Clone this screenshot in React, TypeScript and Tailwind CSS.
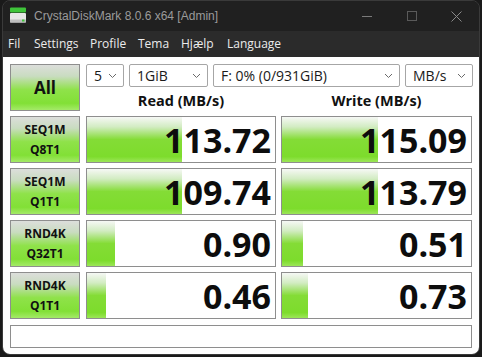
import { ReactNode } from "react";

const rows = [
  { a: "SEQ1M", b: "Q8T1", read: "113.72", write: "115.09", rb: 95, wb: 96 },
  { a: "SEQ1M", b: "Q1T1", read: "109.74", write: "113.79", rb: 95, wb: 96 },
  { a: "RND4K", b: "Q32T1", read: "0.90", write: "0.51", rb: 28, wb: 21 },
  { a: "RND4K", b: "Q1T1", read: "0.46", write: "0.73", rb: 19, wb: 26 },
];

const btn =
  "border border-[#8e8e8e] bg-[linear-gradient(to_bottom,#dcdedb_0%,#c9dcc0_25%,#8fe24a_55%,#82e036_85%,#a4ea68_100%)] text-[#111] font-bold flex flex-col items-center justify-center";

const bar =
  "bg-[linear-gradient(to_bottom,#f6f8f5_0%,#d2ecc2_22%,#84dc36_50%,#7ddc2c_88%,#9ce658_100%)]";

function Chevron() {
  return (
    <svg width="9" height="6" viewBox="0 0 9 6" className="shrink-0">
      <polyline points="1,1 4.5,4.5 8,1" fill="none" stroke="#6a6a6a" strokeWidth="1" />
    </svg>
  );
}

function Combo({ w, children }: { w: string; children: ReactNode }) {
  return (
    <div className={`${w} h-[23px] border border-[#a6a6a6] rounded-[2px] bg-white flex items-center justify-between pl-[7px] pr-[6px] text-[14px] text-[#1a1a1a]`}>
      <span>{children}</span>
      <Chevron />
    </div>
  );
}

function Cell({ value, fill, w }: { value: string; fill: number; w: string }) {
  return (
    <div className={`${w} h-[47px] border border-[#8e8e8e] bg-white relative overflow-hidden`}>
      <div className={`absolute left-0 top-0 bottom-0 ${bar}`} style={{ width: fill }} />
      <div className="relative h-full flex items-center justify-end pr-[4px] text-[34px] font-bold leading-none text-[#0d0d0d]">
        {value}
      </div>
    </div>
  );
}

export default function App() {
  return (
    <div className="w-[482px] h-[357px] bg-[#1a1a1a] overflow-hidden font-['Open_Sans','Noto_Sans',sans-serif]">
      <div className="ml-[2px] w-[478px] h-[355px] border border-[#3a3a3a] rounded-[8px] overflow-hidden flex flex-col">
        {/* title bar */}
        <div className="h-[30px] bg-[#202020] flex items-center shrink-0">
          <svg width="18" height="18" viewBox="0 0 18 18" className="ml-[6px]">
            <rect x="1" y="0.5" width="16" height="5" rx="1" fill="#3fc43a" />
            <rect x="1" y="6" width="16" height="9.5" rx="1" fill="#e6e6e6" />
            <rect x="1" y="12.5" width="16" height="3" fill="#bdbdbd" />
            <rect x="13" y="12.5" width="2.5" height="2" fill="#3fc43a" />
          </svg>
          <span className="ml-[7px] text-[12px] text-[#9b9b9b] font-['Liberation_Sans',sans-serif]">
            CrystalDiskMark 8.0.6 x64 [Admin]
          </span>
          <div className="ml-auto flex h-full">
            <div className="w-[45px] flex items-center justify-center">
              <div className="w-[10px] h-px bg-[#7a7a7a]" />
            </div>
            <div className="w-[45px] flex items-center justify-center">
              <div className="w-[10px] h-[10px] border border-[#5a5a5a]" />
            </div>
            <div className="w-[45px] flex items-center justify-center">
              <svg width="11" height="11" viewBox="0 0 11 11">
                <path d="M0.5 0.5 L10.5 10.5 M10.5 0.5 L0.5 10.5" stroke="#8a8a8a" strokeWidth="1" />
              </svg>
            </div>
          </div>
        </div>

        {/* menu bar */}
        <div className="h-[26px] bg-[#2b2b2b] flex items-center text-[12px] text-[#ececec] pl-[5px] shrink-0">
          <span className="w-[26px]">Fil</span>
          <span className="w-[56px]">Settings</span>
          <span className="w-[48px]">Profile</span>
          <span className="w-[43px]">Tema</span>
          <span className="w-[46px]">Hjælp</span>
          <span>Language</span>
        </div>

        {/* content */}
        <div className="flex-1 bg-white pl-[7px] pt-[7px] flex flex-col gap-[5px]">
          <div className="flex gap-[6px]">
            <div className={`${btn} w-[70px] h-[47px] text-[17px]`}>All</div>
            <div className="flex flex-col">
              <div className="flex gap-[5px]">
                <Combo w="w-[38px]">5</Combo>
                <Combo w="w-[79px]">1GiB</Combo>
                <Combo w="w-[187px]">F: 0% (0/931GiB)</Combo>
                <Combo w="w-[68px]">MB/s</Combo>
              </div>
              <div className="flex gap-[5px] h-[24px] items-end text-[14.5px] font-bold text-[#111] leading-[20px]">
                <div className="w-[190px] text-center">Read (MB/s)</div>
                <div className="w-[191px] text-center">Write (MB/s)</div>
              </div>
            </div>
          </div>

          {rows.map((r) => (
            <div key={r.a + r.b} className="flex">
              <div className={`${btn} w-[70px] h-[47px] text-[12px] leading-[20px] mr-[6px]`}>
                <span>{r.a}</span>
                <span>{r.b}</span>
              </div>
              <Cell value={r.read} fill={r.rb} w="w-[190px] mr-[5px]" />
              <Cell value={r.write} fill={r.wb} w="w-[191px]" />
            </div>
          ))}

          <div className="w-[462px] h-[23px] border border-[#8e8e8e] bg-white mt-[1px]" />
        </div>
      </div>
    </div>
  );
}
